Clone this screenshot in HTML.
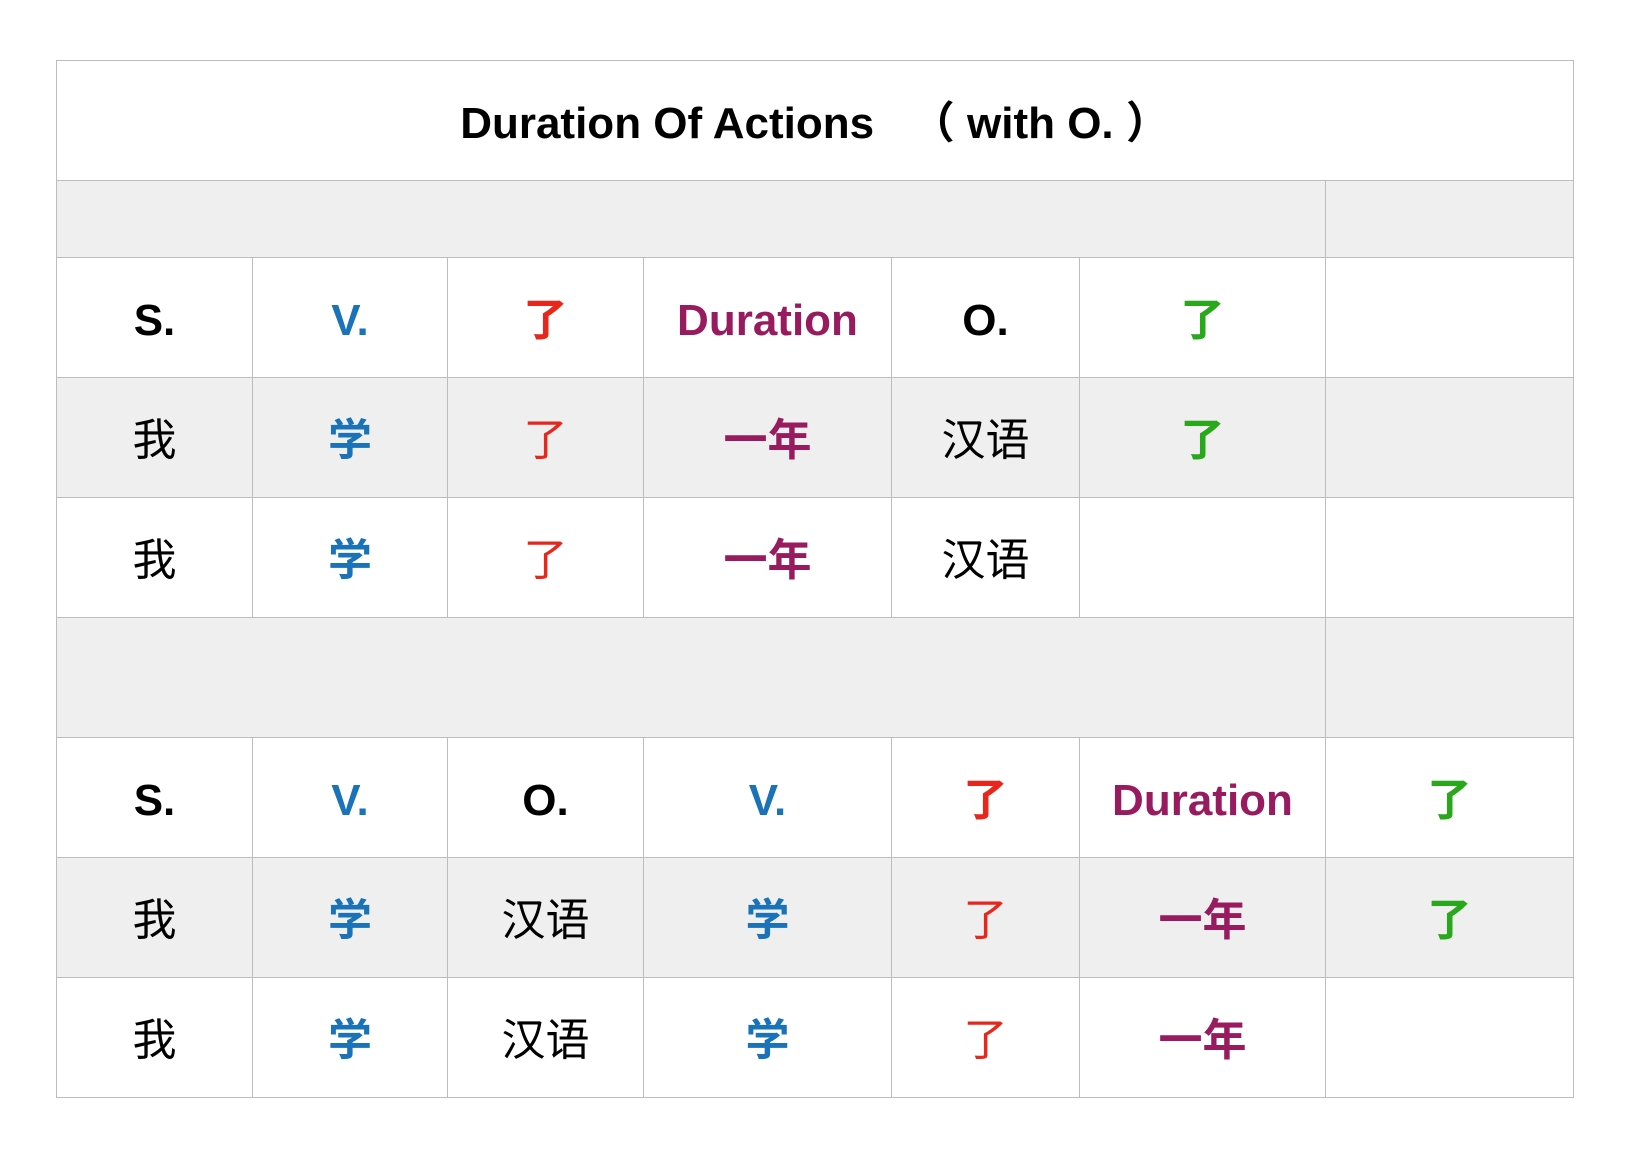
<!DOCTYPE html>
<html><head><meta charset="utf-8"><style>
html,body{margin:0;padding:0;background:#fff;width:1646px;height:1164px;overflow:hidden}
table{position:absolute;left:56px;top:60px;border-collapse:collapse;table-layout:fixed;width:1517px}
td{border:1.5px solid #bdbdbd;text-align:center;vertical-align:middle;padding:6px 0 0 0;font-size:44px;font-family:"Liberation Sans","Noto Sans CJK SC",sans-serif;height:113px;line-height:1}
.t{height:113px;font-weight:bold;font-size:44px;color:#000}
.g td,td.g{background:#efefef}
.h{height:70px}
.b{font-weight:bold}
.k{color:#000}
.v{color:#1a72b8;font-weight:bold}
.r{color:#e8261c}
.p{color:#981b5f;font-weight:bold}
.gr{color:#2aa81c}
</style></head><body>
<table>
<colgroup><col style="width:196px"><col style="width:195px"><col style="width:196px"><col style="width:248px"><col style="width:188px"><col style="width:246px"><col style="width:248px"></colgroup>
<tr><td class="t" colspan="7">Duration Of Actions &nbsp;&nbsp;（ with O. ）</td></tr>
<tr class="g"><td class="h" colspan="6"></td><td class="h"></td></tr>
<tr><td class="b k">S.</td><td class="v">V.</td><td class="r b">了</td><td class="p">Duration</td><td class="b k">O.</td><td class="gr b">了</td><td></td></tr>
<tr class="g"><td>我</td><td class="v">学</td><td class="r">了</td><td class="p">一年</td><td>汉语</td><td class="gr b">了</td><td></td></tr>
<tr><td>我</td><td class="v">学</td><td class="r">了</td><td class="p">一年</td><td>汉语</td><td></td><td></td></tr>
<tr class="g"><td colspan="6"></td><td></td></tr>
<tr><td class="b k">S.</td><td class="v">V.</td><td class="b k">O.</td><td class="v">V.</td><td class="r b">了</td><td class="p">Duration</td><td class="gr b">了</td></tr>
<tr class="g"><td>我</td><td class="v">学</td><td>汉语</td><td class="v">学</td><td class="r">了</td><td class="p">一年</td><td class="gr b">了</td></tr>
<tr><td>我</td><td class="v">学</td><td>汉语</td><td class="v">学</td><td class="r">了</td><td class="p">一年</td><td></td></tr>
</table>
</body></html>
